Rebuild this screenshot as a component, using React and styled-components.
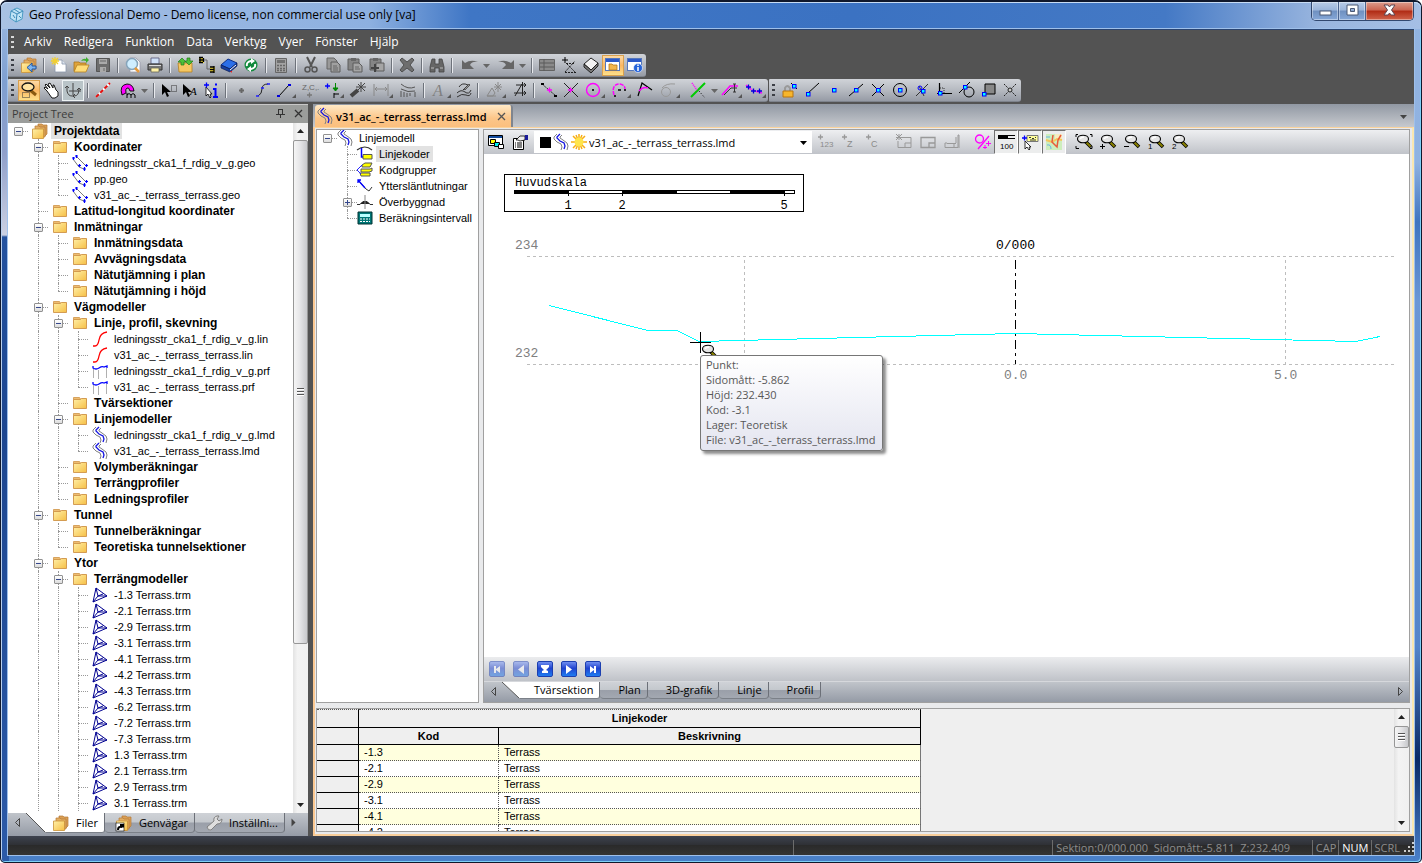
import { useState } from 'react';
import styled, { createGlobalStyle, css } from 'styled-components';

const UI_FONT = "'Open Sans', 'Noto Sans', sans-serif";
const TREE_FONT = "'Liberation Sans', Arial, sans-serif";
const MONO_FONT = "'Liberation Mono', 'Courier New', monospace";

const GlobalStyle = createGlobalStyle`
  * {
    box-sizing: border-box;
  }
  body {
    margin: 0;
    overflow: hidden;
    font-family: ${UI_FONT};
    font-size: 11px;
    color: #000;
  }
  button, select {
    font: inherit;
    color: inherit;
    border: 0;
    padding: 0;
    margin: 0;
    background: none;
  }
  svg {
    display: block;
    flex: none;
    overflow: visible;
  }
`;

/* ---------- icons ---------- */

const snake = (
  <>
    <path d="M4 0L1 3v2l3 3 4 2 1 3-1 3M9 1L7 3v1l3 2 4 3 1 3-1 4" fill="none" stroke="#808080" />
    <path d="M7 0L4 3v1l3 3 4 2 1 3-1 3" fill="none" stroke="#1414e0" strokeWidth="1.300" />
  </>
);

const lens = (
  <>
    <path d="M10 8l5 5" stroke="#000" strokeWidth="3.500" />
    <path d="M10.500 8.500l4 4" stroke="#8a8200" strokeWidth="2" />
    <ellipse cx="7" cy="5" rx="5.500" ry="3.800" fill="#e4e4e4" stroke="#000" strokeWidth="1.100" />
    <path d="M4 5q1-2 4-2" stroke="#fff" strokeWidth="1.500" fill="none" />
  </>
);

const folder = (
  <>
    <path d="M1.500 2.500h6l1 1.500h6v4h-13z" fill="#eebd72" stroke="#cf9448" strokeWidth=".8" />
    <path d="M1.500 4.500h7l1-1h5v10h-13z" fill="url(#folderFill)" stroke="#cf9448" strokeWidth=".9" />
  </>
);

const folders = (
  <>
    <path d="M6 1h4l1 1h4v9l-3 3H6z" fill="#d99f55" stroke="#b47a36" strokeWidth=".7" />
    <path d="M3 3h4l1 1h5v10H3z" fill="#e3ae62" stroke="#b47a36" strokeWidth=".7" />
    <path d="M.5 6h11v9.500H.5z" fill="url(#folderFill)" stroke="#c99238" strokeWidth=".8" />
  </>
);

const node = (x, y) => <rect x={x - 1.5} y={y - 1.5} width="3.500" height="3.500" fill="#0ff" stroke="#00f" />;
const plus = (x, y, c) => <path d={`M${x - 2} ${y}h5M${x + 0.5} ${y - 2.5}v5`} stroke={c} strokeWidth="1.300" />;
const cursor = (
  <path d="M1 2v11l3-3 2 5 2-1-2-4h4z" fill="#000" />
);
const windowBase = (
  <>
    <rect x=".5" y="1.500" width="14" height="12" fill="#fff" stroke="#5577bb" />
    <rect x="1" y="2" width="13" height="3" fill="#2a58c8" />
  </>
);
const sheet = (c) => <path d="M2 1h7l3 3v8H2z" fill="#999" stroke={c} />;
const board = <path d="M1 2h11v11H1z" fill="#858585" stroke="#5c5c5c" />;
const plainText = (x, y, s, size = 8, fill = '#000') => (
  <text x={x} y={y} fontSize={size} fill={fill} fontFamily={TREE_FONT}>{s}</text>
);

const ICONS = {
  app: (
    <>
      <path d="M8 1l6 3-1 8-6 3-6-4 1-7z" fill="#bfe4f5" stroke="#4b9cc4" />
      <path d="M2 4l6 3 6-3M8 7l-1 8M5 2l6 4M4 8l2 3M10 9l2 2" stroke="#3b8ab8" fill="none" />
    </>
  ),
  folder,
  folders,
  shortcuts: (
    <>
      {folders}
      <rect x="0" y="8" width="8" height="8" fill="#fff" stroke="#000" strokeWidth=".6" />
      <path d="M1 15q0-4 3-4V9h4v4l-1-1-1 1q-3-1-3 2z" fill="#000" />
    </>
  ),
  wrench: (
    <path d="M1 12l7-6q-1-4 3-5l2 0-2 3 2 2 3-2q0 5-5 5l-6 6q-3 1-4-3z" fill="#dedede" stroke="#808080" />
  ),
  back: (
    <>
      {folders}
      <path d="M15 9h-4V6l-5 4.500 5 4.500v-3h4z" fill="#7db4ee" stroke="#1d55a5" />
    </>
  ),
  newFile: (
    <>
      <path d="M4 3h7l4 4v8H4z" fill="#fff" stroke="#8a97ab" strokeWidth=".8" />
      <path d="M11 3v4h4" fill="#dde4ee" stroke="#8a97ab" strokeWidth=".8" />
      <path d="M4 0v8M0 4h8M1 1l6 6M7 1L1 7" stroke="#f2cf2f" strokeWidth="1.300" />
    </>
  ),
  open: (
    <>
      <path d="M1 5h5l1 1h6v8H1z" fill="#e0a43b" stroke="#a8731f" strokeWidth=".8" />
      <path d="M4 8h12l-3 7H1z" fill="#ffdc77" stroke="#b58122" strokeWidth=".8" />
      <path d="M8 4q2-3 5-2V0l3 3-3 3V4q-2-1-5 0z" fill="#3fae2f" />
    </>
  ),
  save: (
    <>
      <path d="M1.500 1.500h13v13h-13z" fill="#6d6d6d" stroke="#555" />
      <path d="M4 2h8v5H4zM5 10h6v5H5z" fill="#aaa" />
      <path d="M5 4h6M9 11v3" stroke="#666" />
    </>
  ),
  preview: (
    <>
      <path d="M5 1h6l4 4v10H5z" fill="#fff" stroke="#99a" strokeWidth=".8" />
      <circle cx="7" cy="7" r="5.500" fill="#cfeeff" stroke="#86a5bb" strokeWidth="1.500" />
      <path d="M10 11l4 4" stroke="#e49a3d" strokeWidth="2.500" />
    </>
  ),
  print: (
    <>
      <path d="M4 1h8v6H4z" fill="#cfe0f7" stroke="#557" strokeWidth=".8" />
      <path d="M1 7h14v6H1z" fill="#777" stroke="#333" />
      <path d="M4 11h8v4H4z" fill="#fff2a8" stroke="#665" strokeWidth=".8" />
      <path d="M2 8.500h12" stroke="#ddd" />
    </>
  ),
  transfer: (
    <>
      <path d="M1 6h14v9H2z" fill="#f5c762" stroke="#b58122" strokeWidth=".8" />
      <path d="M4 8V5H1l4-4 4 4H7v3zM10 1h3v3h3l-4 4-4-4h2z" fill="#4cc13a" stroke="#237d18" strokeWidth=".7" />
    </>
  ),
  link: (
    <>
      <path d="M0 1h5v5H0z" fill="#f6df38" />
      <path d="M11 10h5v5h-5z" fill="#f6df38" />
      <path d="M0 .5h4M0 3h4M0 5.500h4M1 0v6M4.500 1v4M11 10h4M11 12.500h4M11 15h4M15 9v7" stroke="#000" strokeWidth="1.300" />
      <path d="M5 3h3v9h3" stroke="#666" fill="none" />
    </>
  ),
  book: (
    <>
      <path d="M0 8l7-6 9 4-7 6z" fill="#2b6fe8" stroke="#0b2d86" />
      <path d="M0 8v3l9 4 7-6V6l-7 6z" fill="#173f9e" stroke="#0b1d56" strokeWidth=".7" />
      <path d="M9 13l6-5" stroke="#fff" />
      <path d="M9 14h2v2z" fill="#e22" />
    </>
  ),
  refresh: (
    <>
      <circle cx="8" cy="8" r="6.500" fill="#128a3c" />
      <path d="M4 9q-1-4 4-5h1M12 7q1 4-4 5H7" stroke="#fff" strokeWidth="2" fill="none" />
      <path d="M8 1l4 3-4 3zM8 15l-4-3 4-3z" fill="#fff" />
    </>
  ),
  calc: (
    <>
      <path d="M2.500 1.500h11v14h-11z" fill="#a3a3a3" stroke="#666" />
      <path d="M4 3h8v3H4z" fill="#707070" />
      <path d="M4 8.500h8M4 11.500h8M4 13.500h8" stroke="#666" strokeWidth="1.500" strokeDasharray="2 1" />
    </>
  ),
  cut: (
    <>
      <path d="M4 0l5 10M12 0L7 10" stroke="#555" strokeWidth="2" />
      <circle cx="4.500" cy="12.500" r="2.500" fill="none" stroke="#555" strokeWidth="1.500" />
      <circle cx="11.500" cy="12.500" r="2.500" fill="none" stroke="#555" strokeWidth="1.500" />
    </>
  ),
  copy: (
    <>
      {sheet('#666')}
      <path d="M6 5h6l3 3v7H6z" fill="#a0a0a0" stroke="#5c5c5c" />
      <path d="M8 9h4M8 11h5M8 13h5" stroke="#666" />
    </>
  ),
  paste: (
    <>
      {board}
      <path d="M4 1h5v3H4z" fill="#666" />
      <path d="M6 6h6l3 3v6H6z" fill="#a5a5a5" stroke="#5c5c5c" />
      <path d="M8 10h4M8 12h5" stroke="#666" />
    </>
  ),
  pastePlus: (
    <>
      {board}
      <path d="M4 1h5v3H4z" fill="#666" />
      <path d="M7 6h8v8H7z" fill="#a5a5a5" stroke="#5c5c5c" />
      <path d="M2 11h8M6 7v8" stroke="#444" strokeWidth="2" />
    </>
  ),
  remove: <path d="M3 1l5 4 5-4 2 2-4 5 4 5-2 2-5-4-5 4-2-2 4-5-4-5z" fill="#6e6e6e" stroke="#505050" />,
  find: (
    <>
      <path d="M3 2h3v5h4V2h3l2 8v5h-5v-4H6v4H1v-5z" fill="#666" stroke="#444" strokeWidth=".8" />
      <path d="M2 11h3M11 11h3" stroke="#bbb" />
    </>
  ),
  undo: <path d="M0 3l3 3q6-4 13-1-6-1-8 3l4 4H0z" fill="#666" />,
  redo: <path d="M16 3l-3 3Q7 2 0 5q6-1 8 3l-4 4h12z" fill="#666" />,
  table: (
    <>
      <path d="M.5 2.500h15v11H.5z" fill="#8a8a8a" stroke="#636363" />
      <path d="M1 6h14M1 10h14M5 2v12" stroke="#5a5a5a" />
    </>
  ),
  plusCross: (
    <>
      <path d="M1 3h6M4 0v6" stroke="#000" />
      <path d="M4 15L14 4M6 7l9 9M5 6.500h9M4 15.500h11" stroke="#111" strokeWidth=".9" strokeDasharray="2 1" />
    </>
  ),
  erase: (
    <>
      <path d="M1 7l7-6 7 5-7 7z" fill="#f2f2f2" stroke="#222" />
      <path d="M1 7v3l7 6 7-7V6l-7 7z" fill="#777" stroke="#222" />
    </>
  ),
  folderWindow: (
    <>
      {windowBase}
      <path d="M4 7h3l1 1h4v5H4z" fill="#f4b64b" stroke="#b57a1b" strokeWidth=".8" />
    </>
  ),
  infoWindow: (
    <>
      {windowBase}
      <circle cx="11" cy="11" r="4.500" fill="#2563d9" stroke="#fff" strokeWidth=".6" />
      <path d="M11 10v4M11 7.500v1.500" stroke="#fff" strokeWidth="1.500" />
    </>
  ),
  zoomArea: (
    <>
      <path d="M9 8l6 5" stroke="#8a5a10" strokeWidth="3" />
      <ellipse cx="7" cy="5" rx="6" ry="4" fill="#ffe2a0" stroke="#111" strokeWidth="1.300" />
      <path d="M1.500 10.500h7v5h-7z" fill="none" stroke="#333" strokeDasharray="1 1" />
    </>
  ),
  hand: (
    <path d="M4 9L1 6l1-1 3 2-3-4 1-1 4 4-2-4 2-1 3 5V3l1 0 2 5 2 2v4l-3 2H9z" fill="#fff" stroke="#000" strokeWidth=".9" />
  ),
  axes: (
    <>
      <path d="M8 1v14M4 9h12" stroke="#444" />
      <path d="M2 4v5q1 5 5 5M0 6l2-2 2 2M9 14q5 0 5-7M12 8l2-2 2 2M10 12l-2 2 2 2" stroke="#444" fill="none" />
    </>
  ),
  redLine: (
    <>
      <path d="M1 15L15 1" stroke="#fff" strokeWidth="2" />
      <path d="M1 15L15 1" stroke="#e01010" strokeWidth="2" strokeDasharray="4 2" />
    </>
  ),
  magnet: (
    <>
      <path d="M2 13Q-1 3 7 2q6 0 7 7l-4 0q-1-4-3-3-2 1-1 5z" fill="#f0f" stroke="#000" strokeWidth=".9" />
      <path d="M7 16v-5M7 13q2-3 4 0v3M11 13q2-3 4 0v3" stroke="#000" fill="none" />
    </>
  ),
  pickBox: (
    <>
      {cursor}
      <path d="M10.500 3.500h5v6h-5z" fill="none" stroke="#333" strokeDasharray="1 1" />
    </>
  ),
  pickText: (
    <>
      {cursor}
      <text x="8" y="13" fontSize="11" fontStyle="italic" fontFamily="'Liberation Serif', serif">A</text>
    </>
  ),
  pickInfo: (
    <>
      <path d="M3 5v9l2-2 2 4 1-1-1-3h2z" fill="#fff" stroke="#000" strokeWidth=".8" />
      {plus(3, 3, '#00f')}
      <path d="M12.500 6v9M10 7h3M10 15h5M12 2.500h2" stroke="#00f" strokeWidth="2" />
    </>
  ),
  point: <path d="M6 8.500h5M8.500 6v5" stroke="#666" strokeWidth="2" />,
  spline: (
    <>
      <path d="M3 14q4-2 4-7t6-5" stroke="#222" fill="none" />
      <path d="M1 14h3M6 6h3M12 2h3" stroke="#22f" strokeWidth="1.500" />
    </>
  ),
  segment: (
    <>
      <path d="M3 14L13 3" stroke="#000" />
      <path d="M1 13h3v2H1zM12 2h3v2h-3z" fill="#00d" />
    </>
  ),
  zc: (
    <>
      {plainText(0, 8, 'Z,C,.', 8, '#666')}
      {plus(7, 13, '#777')}
    </>
  ),
  moveNode: (
    <>
      {plus(3, 4, '#00f')}
      <path d="M11.500 1v7M9 6h5l-2.500 3z" stroke="#080" fill="#080" />
      <path d="M10 11v5M10 12h5" stroke="#000" />
    </>
  ),
  wand: (
    <>
      <path d="M1 14l7-6" stroke="#444" strokeWidth="4" />
      <path d="M11 0v10M6 5h10M8 2l7 7M15 1L8 8" stroke="#444" />
    </>
  ),
  dimension: <path d="M1 2v12M15 2v12M2 7h12M4 5L2 7l2 2M12 5l2 2-2 2" stroke="#888" fill="none" />,
  section: (
    <>
      <path d="M1 2q7 6 14 3M1 7q7 4 14 2" stroke="#555" fill="none" />
      <path d="M1 9v6M4 10v5M7 11v4M10 11v3M15 10v5" stroke="#555" />
    </>
  ),
  text: (
    <text x="2" y="14" fontSize="16" fontStyle="italic" fill="#808080" fontFamily="'Liberation Serif', serif">A</text>
  ),
  contour: (
    <>
      <path d="M3 5q3-5 9-2l-5 5M1 11q4-4 8-1t6-2M1 15q5-4 9-2t5-2" stroke="#333" fill="none" />
      <path d="M8 7l5-5 1 1-5 5z" fill="#999" stroke="#333" strokeWidth=".7" />
    </>
  ),
  hillStar: (
    <>
      <path d="M1 14l5-8 3 5-2 3zM1 14h9" stroke="#888" fill="none" />
      <path d="M12 0v10M8 5h8M9 2l6 6M15 2L9 8" stroke="#888" />
    </>
  ),
  angleTool: <path d="M10.500 0v14M3 14L10 2M4 3h10M12 1l2 2-2 2M2 11h12M12 9l2 2-2 2" stroke="#222" fill="none" />,
  divide: (
    <>
      <path d="M1 2l14 12" stroke="#222" strokeDasharray="2 1" />
      <path d="M0 1h3v2H0zM13 13h3v2h-3z" fill="#000" />
      {plus(8, 8, '#f0f')}
    </>
  ),
  crossing: (
    <>
      <path d="M1 1l14 14M15 1L1 15" stroke="#222" />
      {plus(7, 8, '#f0f')}
    </>
  ),
  circle: (
    <>
      <circle cx="8" cy="8" r="6.500" fill="none" stroke="#f0f" strokeWidth="1.400" />
      <rect x="7" y="7" width="2" height="2" fill="#222" />
    </>
  ),
  arc: (
    <>
      <path d="M3 13Q0 2 9 2q5 1 5 5" fill="none" stroke="#f0f" strokeWidth="1.500" strokeDasharray="4 1" />
      <path d="M7 8h3M3 14h2M14 7v2" stroke="#000" strokeWidth="1.500" />
    </>
  ),
  fillet: (
    <>
      <path d="M1 14L5 1l10 7" fill="none" stroke="#000" strokeWidth="1.200" />
      <path d="M2 9q4-5 9-3" fill="none" stroke="#f0f" strokeWidth="1.500" />
    </>
  ),
  tangent: (
    <>
      <circle cx="6" cy="10" r="4.500" fill="none" stroke="#999" />
      <path d="M2 6Q6 1 15 2" fill="none" stroke="#999" />
    </>
  ),
  greenLine: (
    <>
      <path d="M1 15L15 1" stroke="#0c0" strokeWidth="2" />
      <path d="M2 1l5 7" stroke="#f0f" strokeWidth="1.500" strokeDasharray="1 1" />
      <path d="M9 9l6 7" stroke="#000" strokeDasharray="1 2" />
    </>
  ),
  offset: (
    <>
      <path d="M0 13L8 4h8" stroke="#f0f" strokeWidth="1.500" fill="none" />
      <path d="M2 13L9 6h6M11 2h3M12.500 2v8M11 10h3" stroke="#333" fill="none" />
    </>
  ),
  polyPoints: (
    <>
      <path d="M0 3l6 5 10 3" stroke="#f0f" strokeWidth="1.500" strokeDasharray="3 1" fill="none" />
      {plus(2, 5, '#00d')}
      {plus(7, 9, '#00d')}
      {plus(13, 9, '#00d')}
    </>
  ),
  lock: (
    <>
      <path d="M3 9V6q2-4 5 0v3" stroke="#999" strokeWidth="2" fill="none" />
      <path d="M1 9h10v6H1z" fill="#f7b62c" stroke="#b9750e" />
      <path d="M9 1l6 6" stroke="#000" />
      {node(12, 4)}
    </>
  ),
  snapEnd: <><path d="M3 12L15 1" stroke="#000" />{node(4, 12)}</>,
  snapPoint: node(8, 8),
  snapMid: <><path d="M1 14L15 2" stroke="#000" />{node(8, 8)}</>,
  snapCross: <><path d="M2 2l12 12M14 2L2 14" stroke="#000" />{node(8, 8)}</>,
  snapCenter: <><circle cx="8" cy="8" r="6.500" fill="none" stroke="#000" />{node(8, 8)}</>,
  snapNear: <><path d="M2 14L14 2M5 4l5 10" stroke="#333" />{node(9, 9)}<circle cx="6" cy="6" r="2" fill="none" stroke="#00f" /></>,
  snapPerp: (
    <>
      <path d="M3.500 1v10M1 11.500h15" stroke="#000" strokeWidth="1.200" />
      <path d="M4 6h4v5" stroke="#333" fill="none" strokeDasharray="1 1" />
      {node(4, 11)}
    </>
  ),
  snapTangent: <><circle cx="11" cy="10" r="5" fill="none" stroke="#000" /><path d="M1 11L12 0" stroke="#000" />{node(7, 5)}</>,
  snapCorner: <><path d="M5 2h10v10H5z" fill="#888" stroke="#000" />{node(4, 12)}</>,
  snapNone: <><path d="M2 2l12 12M14 2L2 14" stroke="#222" strokeDasharray="2 1" /><circle cx="8" cy="8" r="2" fill="#ccc" stroke="#222" /></>,
  geo: (
    <>
      <path d="M4 1l10 10M1 4l6 8 5 2" fill="none" stroke="#777" />
      <path d="M0 3h3M1.500 2v3M3 1h3M4.500 0v3M6 10.500h3M7.500 9v3M13 10.500h3M14.500 9v3M11 14h3M12.500 12v4" stroke="#00f" strokeWidth="1.200" />
    </>
  ),
  lin: <path d="M1 15h2q3 0 4-6 1-7 8-8" fill="none" stroke="#f00" strokeWidth="1.300" />,
  prf: (
    <>
      <path d="M1.500 6v9M6.500 7v9M14.500 5v10" stroke="#b0b0b0" />
      <path d="M1 3v2q3 2 6 0t5-1l3-1v2" fill="none" stroke="#00f" strokeWidth="1.300" />
    </>
  ),
  lmd: snake,
  trm: (
    <path d="M4 1l11 8-14 6zM4 1l2 8 9 0M6 9l-5 6M6 9l5-2" fill="none" stroke="#000090" />
  ),
  code: (
    <>
      <path d="M0 4q8-6 15 0" stroke="#333" fill="none" strokeWidth="1.200" />
      <path d="M4.500 2v9h2" stroke="#00f" fill="none" strokeWidth="1.500" />
      <path d="M6 8.500h9v4.500H6z" fill="#ff0" stroke="#555" />
    </>
  ),
  group: (
    <>
      <path d="M5 3l3-2h7l-2 4H5zM4 7h9l2-1v3l-3 1H4zM3 11h10v3H4z" fill="#ff0" stroke="#555" />
      <path d="M5 3L0 8l4 4" stroke="#22f" fill="none" />
    </>
  ),
  slope: (
    <>
      <path d="M1 2l8 9 3 2 3-4" stroke="#333" fill="none" />
      <path d="M1 5V2h3M1 2l7 8" stroke="#00f" fill="none" strokeWidth="1.300" />
    </>
  ),
  build: (
    <>
      <path d="M0 10.500h3l3-3h4l3 3h3" stroke="#333" fill="none" />
      <path d="M3 10q5-6 10 0z" fill="#222" />
      <path d="M8 1v14" stroke="#888" />
    </>
  ),
  interval: (
    <>
      <path d="M1 2h14v12H1z" fill="#077" stroke="#033" />
      <path d="M3 4h10v3H3z" fill="#bff" />
      <path d="M3 9h10M3 11.500h10" stroke="#fff" strokeDasharray="2 1" />
    </>
  ),
  layers: (
    <>
      <path d="M.5 1.500h14v10H.5z" fill="#fff" stroke="#000" />
      <path d="M1 3h13" stroke="#124a9c" strokeWidth="2" />
      <path d="M2.500 5.500h5v4h-5z" fill="#ff0" stroke="#000" />
      <path d="M6.500 8.500h5v4h-5z" fill="#0ee" stroke="#000" />
      <path d="M10.500 10.500h5v4h-5z" fill="#fff" stroke="#000" />
    </>
  ),
  props: (
    <>
      <path d="M1.500 4.500h10v11h-10z" fill="#fff" stroke="#000" />
      <path d="M3 9h1M5 9h5M3 11h1M5 11h5M3 13h1M5 13h5" stroke="#000" />
      <path d="M4 6l4-4 5 0 0 4-5 1-2-1z" fill="#eee" stroke="#000" strokeWidth=".8" />
      <path d="M13 1h3v5h-3z" fill="#1b1b9a" />
    </>
  ),
  sun: (
    <>
      <path d="M8 0v16M0 8h16M2 2l12 12M14 2L2 14M5 1l6 14M11 1L5 15" stroke="#f7ad12" strokeWidth="1.500" />
      <circle cx="8" cy="8" r="4.500" fill="#ffe54a" />
    </>
  ),
  label123: <>{plus(2, 3, '#999')}{plainText(2, 13, '123', 8, '#8a8a8a')}</>,
  labelZ: <>{plus(2, 3, '#999')}{plainText(5, 13, 'Z', 9, '#8a8a8a')}</>,
  labelC: <>{plus(2, 3, '#999')}{plainText(5, 13, 'C', 9, '#8a8a8a')}</>,
  frameNew: <path d="M6 3.500h9v10H2V7M9 13V9h6M0 0l6 6M3 0v6M0 3.500h6M6 0L0 6" stroke="#999" fill="none" />,
  frameCorner: <path d="M1 3.500h14v10H1zM9 14V9h6" stroke="#999" fill="none" strokeWidth="1.300" />,
  frameBottom: <path d="M1 9v4.500h13V1h1v13M3 9.500h9M10 10v3M1 9h2M12 9V3" stroke="#999" fill="none" />,
  percent: (
    <>
      <circle cx="5.500" cy="5" r="4" fill="none" stroke="#f0f" strokeWidth="1.300" />
      <path d="M15 2L4 15" stroke="#f0f" strokeWidth="1.300" />
      <path d="M12 9.500h5M14.500 7v5M9 13.500h4M11 11v4" stroke="#f0f" />
    </>
  ),
  scale: (
    <>
      <path d="M0 1h10v4H0zM10 1h7v1h-7zM10 4h7v1h-7z" fill="#000" />
      {plainText(2, 15, '100', 8)}
    </>
  ),
  hint: (
    <>
      <path d="M5 1.500h11v6H5z" fill="#ff9" stroke="#777" />
      <path d="M7 3.500h2M10 4.500h2M13 3.500h1M8 6h6" stroke="#333" />
      {plus(2, 4, '#00f')}
      <path d="M3 7v8l2-2 2 3 1-1-1-2h2z" fill="#fff" stroke="#000" strokeWidth=".8" />
    </>
  ),
  map: (
    <>
      <path d="M0 0h16v16H0z" fill="#cdeebd" />
      <path d="M9 0h7v6H9z" fill="#f8ecc0" />
      <path d="M0 6l6 2 5-3 5 1" stroke="#f6c65a" strokeWidth="2" fill="none" />
      <path d="M7 1l-1 7 5 5 1-7 3-5" stroke="#e8593a" strokeWidth="1.500" fill="none" />
      <path d="M1 11q4-1 4 4M0 3h4" stroke="#69b5e5" fill="none" />
    </>
  ),
  zoomFit: (
    <>
      {lens}
      <path d="M0 3V.5h2M14 .5h2V3M0 12v2.500h3M16 12v2.500h-2" stroke="#000" fill="none" />
    </>
  ),
  zoomIn: <>{lens}<path d="M0 12.500h5M2.500 10v5" stroke="#000" /></>,
  zoomOut: <>{lens}<path d="M0 12.500h5" stroke="#000" /></>,
  zoomOne: <>{lens}{plainText(0, 15, '1')}</>,
  zoomTwo: <>{lens}{plainText(0, 15, '2')}</>,
};

const Icon = ({ name, corner }) => (
  <svg width={corner ? 20 : 16} height="16" viewBox={corner ? '0 0 20 16' : '0 0 16 16'} aria-hidden="true">
    {ICONS[name]}
    {corner ? <path d="M20 12v4h-4z" fill="#555" /> : null}
  </svg>
);

const Arrow = ({ dir = 'down', color = '#444', hollow }) => {
  const shapes = {
    down: 'M1 3h7L4.500 7z',
    up: 'M1 6h7L4.500 2z',
    left: 'M6.500 .5v8l-4-4z',
    right: 'M2.500 .5v8l4-4z',
  };
  return (
    <svg width="9" height="9" viewBox="0 0 9 9" aria-hidden="true">
      <path d={shapes[dir]} fill={hollow ? 'none' : color} stroke={hollow ? color : 'none'} />
    </svg>
  );
};

/* ---------- window frame ---------- */

const WindowFrame = styled.div`
  height: 100vh;
  display: flex;
  flex-direction: column;
  padding: 0 7px 7px;
  border: 1px solid #10182c;
  border-top-width: 2px;
  border-radius: 7px 7px 5px 5px;
  box-shadow: inset 1px 1px 0 #b9d0ee, inset -1px -1px 0 #7fd0f5;
  background:
    linear-gradient(180deg, #9fbde4 0, #7f9fd0 80px, #8f9fca 150px, #cbd0e2 232px, #cbd0e2 233px, #24529f 235px, #1d4690 50%, #2c5aa8 100%) 0 0 / 8px 100% no-repeat,
    linear-gradient(180deg, #93b4e0 0, #8fb2e2 160px, #3f74c0 220px, #6b97d6 300px, #5484ca 75%, #0a2a66 88%, #4a80cb 100%) 100% 0 / 8px 100% no-repeat,
    #4a80c8;
`;

const TitleBar = styled.header`
  flex: none;
  height: 27px;
  margin: 0 -7px;
  padding: 0 7px 0 8px;
  display: flex;
  align-items: flex-start;
  gap: 4px;
  border-radius: 6px 6px 0 0;
  box-shadow: inset 0 1px 0 #c7dcf5;
  background: linear-gradient(90deg, #a9c2e3 0, #9ab8e2 12%, #8db0e0 26%, #3f76c5 33%, #3b72c2 60%, #4479c5 82%, #9ab6df 93%, #a5bfe5 100%);

  svg {
    margin-top: 5px;
  }
`;

const Title = styled.h1`
  flex: 1;
  margin: 0;
  font-size: 12px;
  line-height: 25px;
  font-weight: 400;
  white-space: nowrap;
`;

const WindowButtons = styled.div`
  display: flex;
  border: 1px solid #32486f;
  border-top: 0;
  border-radius: 0 0 5px 5px;
  overflow: hidden;
`;

const WindowButton = styled.button`
  width: ${(props) => (props.$close ? 47 : 27)}px;
  height: 18px;
  display: flex;
  justify-content: center;
  border-right: 1px solid #4a638e;
  box-shadow: inset 0 0 0 1px rgba(255, 255, 255, 0.4);
  background: ${(props) =>
    props.$close
      ? 'linear-gradient(#dd9c8c 0, #cb6450 45%, #b02b14 50%, #d0644c 100%)'
      : 'linear-gradient(#b8cce8 0, #9ab4da 45%, #6f90c0 50%, #86a8d8 100%)'};

  &:last-child {
    border-right: 0;
  }

  svg {
    margin-top: 2px;
  }
`;

const Shell = styled.div`
  flex: 1;
  min-height: 0;
  display: flex;
  flex-direction: column;
  background: #535353;
  border-top: 1px solid #2a4470;
  box-shadow: 0 0 0 1px #9fc0ea;
`;

/* ---------- menu and toolbars ---------- */

const Grip = styled.span`
  width: 3px;
  height: 13px;
  margin: 0 4px 0 3px;
  flex: none;
  background: repeating-linear-gradient(${(props) => (props.$light ? '#d8d8d8' : '#3c3f46')} 0 2px, transparent 2px 5px);
`;

const MenuBar = styled.nav`
  height: 24px;
  display: flex;
  align-items: center;
  color: #fff;
`;

const MenuItem = styled.button`
  padding: 0 6px;
  font-size: 12px;
  line-height: 20px;
`;

const ToolbarLine = styled.div`
  height: 25px;
  display: flex;
  gap: 1px;
`;

const Toolbar = styled.div`
  display: flex;
  align-items: center;
  height: 23px;
  border-bottom: 1px solid #7e838c;
  border-radius: 1px 3px 3px 1px;
  background: linear-gradient(#d0d3d8, #b6bac1 50%, #969ba5);
`;

const ToolButton = styled.button`
  flex: none;
  width: ${(props) => props.$width || 22}px;
  height: 21px;
  display: flex;
  align-items: center;
  justify-content: ${(props) => (props.$split ? 'space-between' : 'center')};
  padding: ${(props) => (props.$split ? '0 1px 0 6px' : '0')};
  ${(props) =>
    props.$active === 'warm' &&
    css`
      border: 1px solid #d8a04e;
      background: linear-gradient(#fdd9a5, #fbb863 50%, #fde08a);
    `}
  ${(props) =>
    props.$active === 'cool' &&
    css`
      border: 1px solid #eef3f4;
      background: #b9c4c8;
    `}
`;

const Separator = styled.span`
  flex: none;
  width: 2px;
  height: 15px;
  margin: 0 3px;
  background: linear-gradient(90deg, #6d727a 50%, #e8eaee 50%);
`;

const MAIN_TOOLS = [
  ['back'], null, ['newFile'], ['open'], ['save'], null, ['preview'], ['print'], null,
  ['transfer'], ['link'], ['book'], ['refresh'], null, ['calc'], null,
  ['cut'], ['copy'], ['paste'], ['pastePlus'], null, ['remove'], null, ['find'], null,
  ['undo', { split: true, width: 36 }], ['redo', { split: true, width: 36 }], null,
  ['table'], ['plusCross'], ['erase'], ['folderWindow', { active: 'warm' }], ['infoWindow'],
];

const DRAW_TOOLS = [
  ['zoomArea', { active: 'warm' }], ['hand'], ['axes', { active: 'cool' }], null,
  ['redLine'], ['magnet', { split: true, width: 36 }], null,
  ['pickBox'], ['pickText', { width: 20 }], ['pickInfo'], null,
  ['point'], ['spline'], ['segment', { width: 24, corner: true }], ['zc', { width: 24 }],
  ['moveNode', { width: 24, corner: true }], ['wand', { width: 24 }], ['dimension', { width: 26, corner: true }],
  ['section', { width: 24 }], null,
  ['text', { width: 26, corner: true }], ['contour', { width: 20 }], null,
  ['hillStar', { width: 28, corner: true }], ['angleTool', { width: 20 }], null,
  ['divide'], ['crossing'], ['circle', { width: 26, corner: true }], ['arc', { width: 26, corner: true }], ['fillet'],
  ['tangent', { width: 28, corner: true }], ['greenLine', { split: true, width: 36 }],
  ['offset', { width: 24, corner: true }], ['polyPoints', { width: 24, corner: true }],
];

const SNAP_TOOLS = [
  ['lock'], ['snapEnd'], ['snapPoint'], ['snapMid'], ['snapCross'], ['snapCenter'],
  ['snapNear'], ['snapPerp'], ['snapTangent'], ['snapCorner'], ['snapNone'],
];

const ToolStrip = ({ tools, label }) => (
  <Toolbar role="toolbar" aria-label={label}>
    <Grip />
    {tools.map((tool, i) => {
      if (!tool) return <Separator key={i} />;
      const [name, opts = {}] = tool;
      return (
        <ToolButton key={i} aria-label={name} $width={opts.width} $split={opts.split} $active={opts.active}>
          <Icon name={name} corner={opts.corner} />
          {opts.split ? <Arrow color="#666" /> : null}
        </ToolButton>
      );
    })}
  </Toolbar>
);

/* ---------- tree ---------- */

const TreeRow = styled.div`
  display: flex;
  height: 16px;
  align-items: center;
  white-space: nowrap;
`;

const Guide = styled.span`
  flex: none;
  width: 20px;
  height: 16px;
  display: grid;
  grid-template: 8px 8px / 10px 10px;

  &::before {
    content: '';
    grid-area: 1 / 2 / ${(props) => (props.$end ? 2 : 3)} / 3;
    border-left: 1px dotted ${(props) => (props.$line ? '#999' : 'transparent')};
  }
`;

const NodeCell = styled(Guide)`
  &::after {
    content: '';
    grid-area: 2 / 2 / 3 / 3;
    border-top: 1px dotted #999;
  }
`;

const Toggle = styled.button`
  grid-area: 1 / 1 / 3 / 3;
  align-self: center;
  justify-self: center;
  z-index: 1;
  width: 9px;
  height: 9px;
  border: 1px solid #919191;
  border-radius: 1px;
  background:
    linear-gradient(#35478c, #35478c) center / 5px 1px no-repeat,
    ${(props) => (props.$open ? '' : 'linear-gradient(#35478c, #35478c) center / 1px 5px no-repeat,')}
    linear-gradient(#fff, #ddd);
`;

const TreeIcon = styled.span`
  flex: none;
  display: flex;
  justify-content: flex-end;
  width: ${(props) => (props.$compact ? 16 : 20)}px;
`;

const TreeLabel = styled.span`
  margin-left: 3px;
  padding: 0 3px;
  font-family: ${TREE_FONT};
  font-size: ${(props) => (props.$bold ? 12 : 11)}px;
  font-weight: ${(props) => (props.$bold ? 700 : 400)};
  line-height: 16px;
  background: ${(props) => (props.$selected ? '#e2e2e2' : 'none')};
`;

const TreeNode = ({ item, last, lines, root, boldFolders }) => {
  const [open, setOpen] = useState(!item.closed);
  return (
    <>
      <TreeRow role="treeitem" aria-selected={Boolean(item.selected)}>
        {lines.map((line, i) => (
          <Guide key={i} $line={line} />
        ))}
        <NodeCell $line={!root} $end={last}>
          {item.children ? (
            <Toggle $open={open} aria-label={item.label} onClick={() => setOpen((prev) => !prev)} />
          ) : null}
        </NodeCell>
        <TreeIcon $compact={!boldFolders}>
          <Icon name={item.icon || 'folder'} />
        </TreeIcon>
        <TreeLabel $bold={boldFolders && (!item.icon || root)} $selected={item.selected}>
          {item.label}
        </TreeLabel>
      </TreeRow>
      {open && item.children
        ? item.children.map((child, i) => (
            <TreeNode
              key={child.label}
              item={child}
              last={i === item.children.length - 1 && !item.more}
              lines={root ? [false] : [...lines, !last]}
              boldFolders={boldFolders}
            />
          ))
        : null}
    </>
  );
};

const surfaces = [
  '-1.3', '-2.1', '-2.9', '-3.1', '-4.1', '-4.2', '-4.3', '-6.2', '-7.2', '-7.3', '1.3', '2.1', '2.9', '3.1',
];

const PROJECT = {
  label: 'Projektdata',
  icon: 'folders',
  selected: true,
  more: true,
  children: [
    {
      label: 'Koordinater',
      children: [
        { label: 'ledningsstr_cka1_f_rdig_v_g.geo', icon: 'geo' },
        { label: 'pp.geo', icon: 'geo' },
        { label: 'v31_ac_-_terrass_terrass.geo', icon: 'geo' },
      ],
    },
    { label: 'Latitud-longitud koordinater' },
    {
      label: 'Inmätningar',
      children: [
        { label: 'Inmätningsdata' },
        { label: 'Avvägningsdata' },
        { label: 'Nätutjämning i plan' },
        { label: 'Nätutjämning i höjd' },
      ],
    },
    {
      label: 'Vägmodeller',
      children: [
        {
          label: 'Linje, profil, skevning',
          children: [
            { label: 'ledningsstr_cka1_f_rdig_v_g.lin', icon: 'lin' },
            { label: 'v31_ac_-_terrass_terrass.lin', icon: 'lin' },
            { label: 'ledningsstr_cka1_f_rdig_v_g.prf', icon: 'prf' },
            { label: 'v31_ac_-_terrass_terrass.prf', icon: 'prf' },
          ],
        },
        { label: 'Tvärsektioner' },
        {
          label: 'Linjemodeller',
          children: [
            { label: 'ledningsstr_cka1_f_rdig_v_g.lmd', icon: 'lmd' },
            { label: 'v31_ac_-_terrass_terrass.lmd', icon: 'lmd' },
          ],
        },
        { label: 'Volymberäkningar' },
        { label: 'Terrängprofiler' },
        { label: 'Ledningsprofiler' },
      ],
    },
    {
      label: 'Tunnel',
      children: [{ label: 'Tunnelberäkningar' }, { label: 'Teoretiska tunnelsektioner' }],
    },
    {
      label: 'Ytor',
      more: true,
      children: [
        {
          label: 'Terrängmodeller',
          more: true,
          children: surfaces.map((s) => ({ label: `${s} Terrass.trm`, icon: 'trm' })),
        },
      ],
    },
  ],
};

const LINE_MODEL = {
  label: 'Linjemodell',
  icon: 'lmd',
  children: [
    { label: 'Linjekoder', icon: 'code', selected: true },
    { label: 'Kodgrupper', icon: 'group' },
    { label: 'Yttersläntlutningar', icon: 'slope' },
    { label: 'Överbyggnad', icon: 'build', closed: true, children: [] },
    { label: 'Beräkningsintervall', icon: 'interval' },
  ],
};

/* ---------- scroll bar ---------- */

const ScrollTrack = styled.div`
  flex: none;
  width: 15px;
  display: flex;
  flex-direction: column;
  align-items: stretch;
  background: linear-gradient(90deg, #e3e3e3, #f3f3f3 30%, #f0f0f0);
`;

const ScrollEnd = styled.button`
  height: 17px;
  display: flex;
  align-items: center;
  justify-content: center;
`;

const ScrollThumb = styled.div`
  flex: 0 1 ${(props) => props.$size};
  display: flex;
  align-items: center;
  justify-content: center;
  border: 1px solid #979797;
  border-radius: 2px;
  background: linear-gradient(90deg, #f5f5f5, #e6e6e8 45%, #c8c9cc);

  &::after {
    content: '';
    width: 7px;
    height: 8px;
    background: repeating-linear-gradient(#555 0 1px, #fff 1px 2px, transparent 2px 3px);
  }
`;

const ScrollSpace = styled.div`
  flex: 1;
`;

const ScrollBar = ({ size }) => (
  <ScrollTrack>
    <ScrollEnd aria-label="Upp"><Arrow dir="up" color="#222" /></ScrollEnd>
    <ScrollThumb $size={size} />
    <ScrollSpace />
    <ScrollEnd aria-label="Ned"><Arrow color="#222" /></ScrollEnd>
  </ScrollTrack>
);

/* ---------- bottom tabs ---------- */

const TabBar = styled.div`
  flex: none;
  height: ${(props) => props.$height}px;
  display: flex;
  align-items: flex-start;
  border-top: ${(props) => (props.$flat ? '0' : '1px solid #d6d8dc')};
  background: linear-gradient(#c0c4ca, #959ba6);
`;

const TabArrow = styled.button`
  width: 18px;
  height: 19px;
  display: flex;
  align-items: center;
  justify-content: center;
`;

const Tab = styled.button`
  display: flex;
  align-items: center;
  gap: 7px;
  height: ${(props) => (props.$tall ? 20 : 17)}px;
  padding: 0 6px ${(props) => (props.$tall ? 0 : 2)}px ${(props) => (props.$tall ? 11 : 18)}px;
  font-size: 11px;
  white-space: nowrap;
  border-right: 1px solid #6c7078;
  border-bottom: 1px solid #7b8088;
  border-radius: 0 0 4px 4px;
  background: linear-gradient(#cfd2d7 0, #c4c8cd 48%, #9a9fa9 52%, #a3a8b1 100%);
  ${(props) =>
    props.$active &&
    css`
      background: #fff;
      padding-left: ${props.$tall ? 7 : 14}px;
      border-radius: 0 0 3px 0;
    `}
`;

const TabSlope = ({ tall }) => (
  <svg width={tall ? 20 : 18} height={tall ? 20 : 17} viewBox={tall ? '0 0 20 20' : '0 0 18 17'} aria-hidden="true">
    <path d={tall ? 'M0 0h20v20z' : 'M0 0h18v17z'} fill="#fff" />
    <path d={tall ? 'M0 0l19.500 19.500' : 'M0 0l17.500 16.500'} stroke="#555" />
  </svg>
);

/* ---------- project panel ---------- */

const Body = styled.main`
  flex: 1;
  min-height: 0;
  display: grid;
  grid-template-columns: 300px minmax(0, 1fr);
  gap: 5px;
`;

const Panel = styled.aside`
  min-height: 0;
  display: flex;
  flex-direction: column;
  background: #fff;
`;

const PanelHeader = styled.div`
  flex: none;
  height: 19px;
  display: flex;
  align-items: center;
  gap: 9px;
  padding: 0 5px 2px 4px;
  font-size: 11px;
  color: #3c3c3c;
  background: #9b9d9b;
  border-top: 1px solid #c8c8c8;

  span {
    flex: 1;
  }
`;

const PanelBody = styled.div`
  flex: 1;
  min-height: 0;
  display: flex;
`;

const Tree = styled.div`
  flex: 1;
  min-width: 0;
  overflow: hidden;
`;

/* ---------- document ---------- */

const Document = styled.section`
  min-height: 0;
  display: flex;
  flex-direction: column;
`;

const DocTabs = styled.div`
  flex: none;
  height: 23px;
  display: flex;
  align-items: flex-end;
  justify-content: space-between;
  padding: 0 6px 0 2px;
  background: linear-gradient(#9198a3, #c6c9ce);
`;

const DocTab = styled.div`
  height: 22px;
  display: flex;
  align-items: center;
  gap: 3px;
  padding: 0 5px 0 2px;
  font-size: 11px;
  font-weight: 600;
  border-right: 2px solid #7f858e;
  border-radius: 3px 3px 0 0;
  background: linear-gradient(#ffe9c6, #fcc689 60%, #fbbf7e);

  button {
    margin-left: 7px;
    display: flex;
  }
`;

const MenuArrow = styled.button`
  height: 22px;
  display: flex;
  align-items: center;
`;

const DocBody = styled.div`
  flex: 1;
  min-height: 0;
  display: flex;
  flex-direction: column;
  gap: 5px;
  padding: 1px 2px 2px 1px;
  border: 2px solid;
  border-top-width: 1px;
  border-color: #fbd39b #fae7b0 #f9cf9b #fbc891;
  background: #e9eaec;
`;

const TopPane = styled.div`
  flex: 1;
  min-height: 0;
  display: grid;
  grid-template-columns: 163px minmax(0, 1fr);
  gap: 4px;
`;

const Frame = styled.div`
  min-height: 0;
  overflow: hidden;
  display: flex;
  flex-direction: column;
  border: 1px solid #a0a0a0;
  background: #fff;
`;

const ViewBar = styled.div`
  flex: none;
  height: 24px;
  display: flex;
  align-items: center;
  background: linear-gradient(#eeeff1, #c0c3c9);
`;

const ViewButton = styled.button`
  flex: none;
  width: 24px;
  height: 24px;
  display: flex;
  align-items: center;
  justify-content: center;
  ${(props) =>
    props.$pressed &&
    css`
      border: 1px solid #fff;
      border-top-color: #707070;
      border-left-color: #707070;
      background: #eceded;
    `}
`;

const ViewGap = styled.span`
  flex: none;
  width: 6px;
`;

const Combo = styled.label`
  flex: 0 1 278px;
  height: 22px;
  display: flex;
  align-items: center;
  gap: 2px;
  margin: 0 2px;
  padding: 0 4px 0 6px;
  background: #fff;

  select {
    flex: 1;
    appearance: none;
    font-size: 11px;
    outline: 0;
  }
`;

const Swatch = styled.span`
  width: 11px;
  height: 11px;
  background: #000;
`;

const Canvas = styled.div`
  flex: 1;
  min-height: 0;
  position: relative;
  overflow: hidden;
`;

const Tooltip = styled.div`
  position: absolute;
  left: 216px;
  top: 201px;
  padding: 1px 7px 3px 5px;
  font-size: 11px;
  line-height: 15px;
  color: #575757;
  white-space: nowrap;
  border: 1px solid #767676;
  border-radius: 3px;
  background: linear-gradient(#fff, #e4e5f0);
  box-shadow: 3px 3px 3px rgba(0, 0, 0, 0.45);
`;

const NavBar = styled(ViewBar)`
  gap: 8px;
  padding-left: 5px;
  background: linear-gradient(#ebecee, #bfc2c8);
`;

const NavButton = styled.button`
  width: 16px;
  height: 16px;
  border: 1px solid #1c3fb0;
  border-radius: 2px;
  background: linear-gradient(#6f8ef0, #2143cf 45%, #1f7df0);
  opacity: ${(props) => (props.disabled ? 0.5 : 1)};
`;

const CrossSection = () => (
  <svg width="100%" height="100%" shapeRendering="crispEdges" fontFamily={MONO_FONT}>
    <rect x="20.500" y="20.500" width="299" height="37" fill="#fff" stroke="#000" />
    <text x="31" y="32" fontSize="12">Huvudskala</text>
    <rect x="30.500" y="36.500" width="280" height="3" fill="#fff" stroke="#000" />
    <path d="M30 36h54v4H30zM138 36h55v4h-55zM246 36h54v4h-54z" />
    <path d="M84.500 36v6M138.500 36v6M300.500 36v6" stroke="#000" />
    <g fontSize="12" textAnchor="middle">
      <text x="84" y="55">1</text>
      <text x="138" y="55">2</text>
      <text x="300" y="55">5</text>
    </g>
    <path d="M43 102.500h867M43 210.500h867M260.500 106v104M801.500 106v104" stroke="#bdbdbd" strokeDasharray="3 3" />
    <path d="M531.500 106v104" stroke="#000" strokeDasharray="9 4 3 4" />
    <g fontSize="13" fill="#808080">
      <text x="31" y="95">234</text>
      <text x="31" y="203">232</text>
      <text x="520" y="225">0.0</text>
      <text x="790" y="225">5.0</text>
      <text x="512" y="95" fill="#000">0/000</text>
    </g>
    <path d="M65 151.500L164 176.500h29l22 11 316-8 341 8 24-5" fill="none" stroke="#0ff" />
    <path d="M206 188.500h21M216.500 178v21" stroke="#000" />
    <g transform="translate(217 190)" shapeRendering="auto">{lens}</g>
  </svg>
);

/* ---------- code table ---------- */

const TablePane = styled.div`
  flex: none;
  height: 124px;
  display: flex;
  justify-content: space-between;
  overflow: hidden;
  border: 1px solid #a0a0a0;
  background: #efefef;
`;

const CodeTable = styled.table`
  width: 604px;
  height: max-content;
  table-layout: fixed;
  border-collapse: separate;
  border-spacing: 0;
  font-family: ${TREE_FONT};
  font-size: 11px;

  th,
  td {
    height: 16px;
    padding: 0 5px;
    line-height: 15px;
    text-align: left;
    border-right: 1px dotted #555;
    border-bottom: 1px dotted #555;
  }

  thead th {
    height: 17px;
    text-align: center;
    background: #efefef;
    border-right: 1px solid #000;
    border-bottom: 1px solid #000;
  }

  thead tr:first-child th {
    height: 19px;
    border-top: 1px dotted #555;
  }

  tbody th {
    background: #efefef;
    border-right: 1px solid #000;
    border-bottom: 1px solid #000;
  }

  tbody td:last-child {
    border-right: 1px solid #777;
  }

  tbody tr {
    background: #fff;
  }

  tbody tr:nth-child(odd) {
    background: #ffffde;
  }
`;

const CODES = ['-1.3', '-2.1', '-2.9', '-3.1', '-4.1', '-4.2'];

/* ---------- status bar ---------- */

const StatusBar = styled.footer`
  flex: none;
  height: 19px;
  display: flex;
  align-items: center;
  padding-top: 3px;
  color: #8d8d8d;
  background: linear-gradient(#3d424e, #2f3136 45%, #2a2a2a 50%, #343434);
`;

const StatusCell = styled.div`
  flex: ${(props) => props.$flex || 'none'};
  min-height: 15px;
  padding: 0 2px 0 3px;
  line-height: 15px;
  white-space: pre;
  border-left: 1px solid #6c6c6c;
  color: ${(props) => (props.$on ? '#fff' : 'inherit')};

  &:first-child {
    border-left: 0;
  }
`;

const SizeGrip = () => (
  <svg width="12" height="12" viewBox="0 0 12 12" aria-hidden="true">
    <path d="M10 1h2v2h-2zM6 5h2v2H6zM10 5h2v2h-2zM2 9h2v2H2zM6 9h2v2H6zM10 9h2v2h-2z" fill="#ccc" />
  </svg>
);

const NAV_SHAPES = [
  ['Första', 'M4 4h2v3l4-3v7L6 8v3H4z', true],
  ['Föregående', 'M10 3v9L4 7.500z', true],
  ['Välj', 'M3 3h8v2L8 8l2 1v2H4V9l2-1-3-3z', false],
  ['Nästa', 'M4 3v9l6-4.500z', false],
  ['Sista', 'M10 4H8v3L4 4v7l4-3v3h2z', false],
];

const viewIcons = (names, pressed) =>
  names.map((name) => (
    <ViewButton key={name} aria-label={name} $pressed={pressed}>
      <Icon name={name} />
    </ViewButton>
  ));

const App = () => {
  const [view, setView] = useState('Tvärsektion');
  return (
    <WindowFrame>
      <GlobalStyle />
      <svg width="0" height="0" style={{ position: 'absolute' }}>
        <linearGradient id="folderFill" x1="0" y1="0" x2="1" y2="1">
          <stop offset="0" stopColor="#fff0a8" />
          <stop offset="1" stopColor="#f6bf45" />
        </linearGradient>
      </svg>
      <TitleBar>
        <Icon name="app" />
        <Title>Geo Professional Demo - Demo license, non commercial use only [va]</Title>
        <WindowButtons>
          <WindowButton aria-label="Minimera">
            <svg width="13" height="13"><rect x="1" y="7" width="11" height="4" fill="#fff" stroke="#4b5975" /></svg>
          </WindowButton>
          <WindowButton aria-label="Maximera">
            <svg width="13" height="13">
              <path d="M1 1h11v10H1zM4.500 4.500v3h4v-3z" fill="#fff" fillRule="evenodd" stroke="#4b5975" />
            </svg>
          </WindowButton>
          <WindowButton $close aria-label="Stäng">
            <svg width="13" height="13">
              <path d="M1 1h4l1.500 2L8 1h4L8.500 6 12 11H8L6.500 9 5 11H1l3.500-5z" fill="#fff" stroke="#5d4550" />
            </svg>
          </WindowButton>
        </WindowButtons>
      </TitleBar>
      <Shell>
        <MenuBar>
          <Grip $light />
          {['Arkiv', 'Redigera', 'Funktion', 'Data', 'Verktyg', 'Vyer', 'Fönster', 'Hjälp'].map((name) => (
            <MenuItem key={name}>{name}</MenuItem>
          ))}
        </MenuBar>
        <ToolbarLine>
          <ToolStrip tools={MAIN_TOOLS} label="Standard" />
        </ToolbarLine>
        <ToolbarLine>
          <ToolStrip tools={DRAW_TOOLS} label="Rita" />
          <ToolStrip tools={SNAP_TOOLS} label="Snap" />
        </ToolbarLine>
        <Body>
          <Panel>
            <PanelHeader>
              <span>Project Tree</span>
              <svg width="9" height="9"><path d="M2.500 0v5M6.500 0v5M2 .5h5M0 5.500h9M4.500 6v3" stroke="#333" /></svg>
              <svg width="9" height="9"><path d="M1 1l7 7M8 1L1 8" stroke="#333" strokeWidth="1.300" /></svg>
            </PanelHeader>
            <PanelBody>
              <Tree role="tree">
                <TreeNode item={PROJECT} lines={[]} root last boldFolders />
              </Tree>
              <ScrollBar size="504px" />
            </PanelBody>
            <TabBar $height={23} $flat>
              <TabArrow aria-label="Vänster"><Arrow dir="left" hollow /></TabArrow>
              <TabSlope tall />
              <Tab $tall $active><Icon name="folders" />Filer</Tab>
              <Tab $tall><Icon name="shortcuts" />Genvägar</Tab>
              <Tab $tall><Icon name="wrench" />Inställni...</Tab>
              <TabArrow aria-label="Höger"><Arrow dir="right" /></TabArrow>
            </TabBar>
          </Panel>
          <Document>
            <DocTabs>
              <DocTab>
                <Icon name="lmd" />
                v31_ac_-_terrass_terrass.lmd
                <button aria-label="Stäng flik">
                  <svg width="9" height="9"><path d="M1 1l7 7M8 1L1 8" stroke="#555" strokeWidth="1.300" /></svg>
                </button>
              </DocTab>
              <MenuArrow aria-label="Fönsterlista"><Arrow /></MenuArrow>
            </DocTabs>
            <DocBody>
              <TopPane>
                <Frame role="tree">
                  <TreeNode item={LINE_MODEL} lines={[]} root last />
                </Frame>
                <Frame>
                  <ViewBar>
                    {viewIcons(['layers', 'props'])}
                    <Combo>
                      <Swatch />
                      <Icon name="lmd" />
                      <Icon name="sun" />
                      <select aria-label="Modell">
                        <option>v31_ac_-_terrass_terrass.lmd</option>
                      </select>
                      <Arrow color="#000" />
                    </Combo>
                    {viewIcons(['label123', 'labelZ', 'labelC'])}
                    <ViewGap />
                    {viewIcons(['frameNew', 'frameCorner', 'frameBottom'])}
                    <ViewGap />
                    {viewIcons(['percent'])}
                    {viewIcons(['scale', 'hint', 'map'], true)}
                    <ViewGap />
                    {viewIcons(['zoomFit', 'zoomIn', 'zoomOut', 'zoomOne', 'zoomTwo'])}
                  </ViewBar>
                  <Canvas>
                    <CrossSection />
                    <Tooltip>
                      <div>Punkt:</div>
                      <div>Sidomått: -5.862</div>
                      <div>Höjd: 232.430</div>
                      <div>Kod: -3.1</div>
                      <div>Lager: Teoretisk</div>
                      <div>File: v31_ac_-_terrass_terrass.lmd</div>
                    </Tooltip>
                  </Canvas>
                  <NavBar>
                    {NAV_SHAPES.map(([label, d, disabled]) => (
                      <NavButton key={label} aria-label={label} disabled={disabled}>
                        <svg width="14" height="14"><path d={d} fill="#fff" /></svg>
                      </NavButton>
                    ))}
                  </NavBar>
                  <TabBar $height={21}>
                    <TabArrow aria-label="Vänster"><Arrow dir="left" hollow /></TabArrow>
                    <TabSlope />
                    {['Tvärsektion', 'Plan', '3D-grafik', 'Linje', 'Profil'].map((name) => (
                      <Tab key={name} $active={view === name} onClick={() => setView(name)}>
                        {name}
                      </Tab>
                    ))}
                    <ScrollSpace />
                    <TabArrow aria-label="Höger"><Arrow dir="right" hollow /></TabArrow>
                  </TabBar>
                </Frame>
              </TopPane>
              <TablePane>
                <CodeTable>
                  <colgroup>
                    <col width="42" />
                    <col width="140" />
                    <col />
                  </colgroup>
                  <thead>
                    <tr>
                      <th />
                      <th colSpan="2">Linjekoder</th>
                    </tr>
                    <tr>
                      <th />
                      <th>Kod</th>
                      <th>Beskrivning</th>
                    </tr>
                  </thead>
                  <tbody>
                    {CODES.map((code) => (
                      <tr key={code}>
                        <th />
                        <td>{code}</td>
                        <td>Terrass</td>
                      </tr>
                    ))}
                  </tbody>
                </CodeTable>
                <ScrollBar size="22px" />
              </TablePane>
            </DocBody>
          </Document>
        </Body>
        <StatusBar>
          <StatusCell $flex="787 1 0" />
          <StatusCell $flex="256 1 0" />
          <StatusCell $flex="256 1 0">{'Sektion:0/000.000  Sidomått:-5.811  Z:232.409'}</StatusCell>
          <StatusCell>CAP</StatusCell>
          <StatusCell $on>NUM</StatusCell>
          <StatusCell>SCRL</StatusCell>
          <SizeGrip />
        </StatusBar>
      </Shell>
    </WindowFrame>
  );
};

export default App;
